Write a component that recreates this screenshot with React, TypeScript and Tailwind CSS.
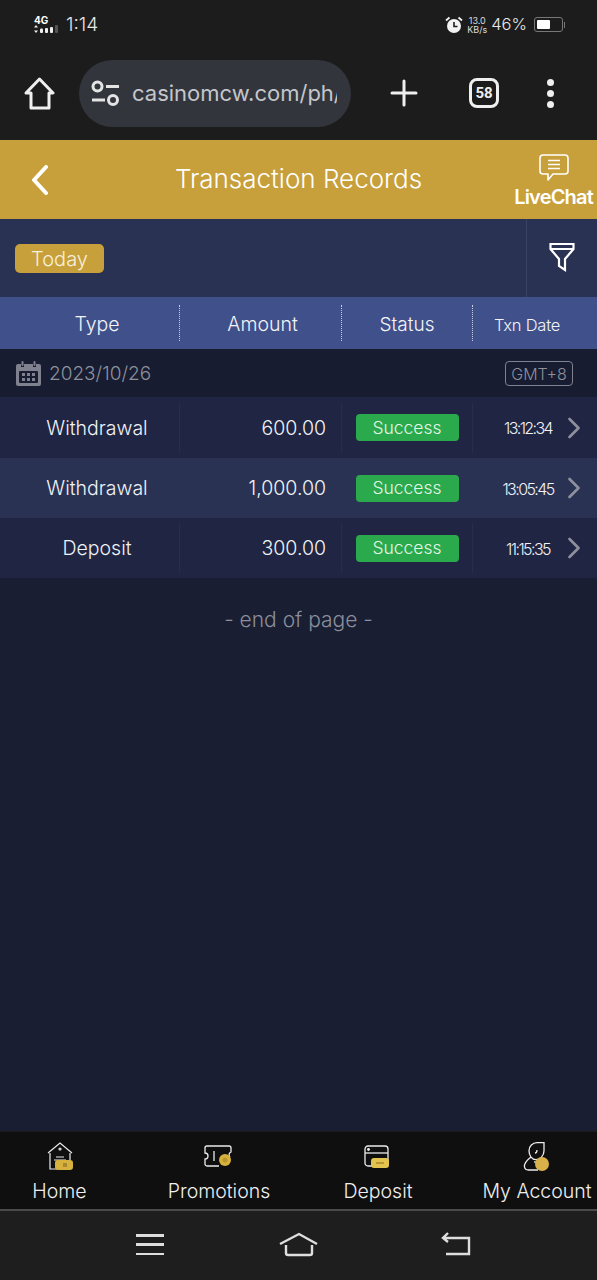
import { ChevronRight } from 'lucide-react'

const rows = [
  { type: 'Withdrawal', amount: '600.00', time: '13:12:34', alt: false, h: 'h-[61px]' },
  { type: 'Withdrawal', amount: '1,000.00', time: '13:05:45', alt: true, h: 'h-[60px]' },
  { type: 'Deposit', amount: '300.00', time: '11:15:35', alt: false, h: 'h-[60px]' },
]

function StatusBar() {
  return (
    <div className="h-[47px] flex items-center justify-between pt-[2px] pl-[34px] pr-[32px] text-[#e8e8e8]">
      <div className="flex items-center gap-[5px]">
        <div className="w-[27px] h-[20px] flex flex-col">
          <span className="text-[10px] leading-[10px] font-bold text-white">4G</span>
          <svg width="27" height="9" viewBox="0 0 27 9" fill="#eee">
            <path d="M2 0l2 2.6H0zM2 8L0 5.4h4z" />
            <rect x="6" y="3.5" width="3" height="4.5" rx="1" />
            <rect x="11" y="3" width="3" height="5" rx="1" />
            <rect x="16" y="2" width="3" height="6" rx="1" />
            <rect x="21" y="0" width="3" height="8" rx="1" fill="#555" />
          </svg>
        </div>
        <span className="text-[19px] leading-none font-light">1:14</span>
      </div>
      <div className="flex items-center">
        <svg width="18" height="18" viewBox="0 0 18 18" className="mr-[4px]">
          <circle cx="9" cy="10" r="7" fill="#f2f2f2" />
          <path d="M9 6v4.5h3.5" fill="none" stroke="#1c1c1c" strokeWidth="1.6" />
          <path d="M1 4.5L4.5 1.5M17 4.5L13.5 1.5" stroke="#f2f2f2" strokeWidth="1.8" />
        </svg>
        <div className="flex flex-col items-center text-[9px] leading-[9px] mr-[4px] text-[#ddd]">
          <span>13.0</span>
          <span>KB/s</span>
        </div>
        <span className="text-[16.5px] leading-none mr-[7px] font-light">46%</span>
        <div className="w-[29px] h-[15px] border border-[#777] rounded-[3px] p-[2px]">
          <div className="w-[13px] h-full bg-white rounded-[1px]" />
        </div>
        <div className="w-[1px] h-[6px] bg-[#777] ml-[1px]" />
      </div>
    </div>
  )
}

function BrowserBar() {
  return (
    <div className="h-[93px] flex items-center pb-[1px]">
      <div className="w-[79px] pl-[24px] shrink-0">
        <svg width="31" height="33" viewBox="0 0 31 33" fill="none" stroke="#efefef" strokeWidth="3" strokeLinejoin="round" strokeLinecap="round">
          <path d="M2 16L15.5 2 29 16h-4v15H7V16z" />
        </svg>
      </div>
      <div className="w-[272px] h-[67px] rounded-full bg-[#33353c] flex items-center pl-[12px] overflow-hidden shrink-0">
        <svg width="29" height="27" viewBox="0 0 29 27" fill="none" stroke="#e4e4e4" strokeWidth="3" className="shrink-0">
          <circle cx="6.5" cy="6.5" r="4.5" />
          <path d="M15 6.5h13M1 20h13" />
          <circle cx="22" cy="20" r="4.5" />
        </svg>
        <span className="ml-[12px] w-[205px] pt-[1px] overflow-hidden text-[22px] text-[#c4c6cb] whitespace-nowrap">casinomcw.com/ph/</span>
      </div>
      <svg width="28" height="28" viewBox="0 0 28 28" stroke="#efefef" strokeWidth="3" strokeLinecap="round" className="ml-[39px] shrink-0">
        <path d="M14 2v24M2 14h24" />
      </svg>
      <div className="ml-[51px] w-[30px] h-[30px] border-[3px] border-[#efefef] rounded-[8px] flex items-center justify-center text-[#efefef] text-[15px] font-bold shrink-0 font-['Roboto',sans-serif]">
        58
      </div>
      <div className="ml-[48px] flex flex-col gap-[4px] shrink-0">
        <span className="w-[7px] h-[7px] rounded-full bg-[#efefef]" />
        <span className="w-[7px] h-[7px] rounded-full bg-[#efefef]" />
        <span className="w-[7px] h-[7px] rounded-full bg-[#efefef]" />
      </div>
    </div>
  )
}

function Header() {
  return (
    <div className="h-[79px] bg-[#c7a03b] flex items-center relative">
      <svg width="18" height="30" viewBox="0 0 18 30" fill="none" stroke="#fff" strokeWidth="4" strokeLinecap="round" strokeLinejoin="round" className="ml-[31px]">
        <path d="M15 2L3 15l12 13" />
      </svg>
      <h1 className="absolute left-0 right-0 -mt-[1px] text-center text-[26px] font-light text-white leading-none">Transaction Records</h1>
      <div className="absolute right-[4px] top-[13px] flex flex-col items-center">
        <svg width="32" height="30" viewBox="0 0 32 30" fill="none" stroke="#fff" strokeWidth="1.6" strokeLinejoin="round">
          <path d="M5 2h22a3 3 0 0 1 3 3v13a3 3 0 0 1-3 3H15l-5 6v-6H5a3 3 0 0 1-3-3V5a3 3 0 0 1 3-3z" />
          <path d="M10 7.5h12M10 11.5h12M10 15.5h12" />
        </svg>
        <span className="text-[20px] leading-[22px] font-semibold text-white tracking-[-0.8px] mt-[3px]">LiveChat</span>
      </div>
    </div>
  )
}

function FilterBar() {
  return (
    <div className="h-[78px] bg-[#293253] flex items-center justify-between">
      <span className="ml-[15px] pt-[1px] w-[89px] h-[29px] rounded-[5px] bg-[#c7a03b] text-[#f7f0dc] text-[20px] font-light flex items-center justify-center">
        Today
      </span>
      <div className="w-[71px] h-full border-l border-[#3a4364] flex items-center justify-center">
        <svg width="26" height="30" viewBox="0 0 26 30" fill="none" stroke="#fff" strokeWidth="2.2" strokeLinejoin="miter" className="-mt-[2px]">
          <path d="M1.5 2h23v5L16 17v11l-6-4v-7L1.5 7zM1.5 7h23" />
        </svg>
      </div>
    </div>
  )
}

function TableHead() {
  return (
    <div className="h-[52px] bg-[#40508a] text-[#f3f4f8] font-light grid grid-cols-[180px_162px_131px_124px] items-center text-center">
      <div className="text-[19.5px] pl-[15px] h-[36px] leading-[38px] border-r border-dotted border-[#c8cde0]">Type</div>
      <div className="text-[19.5px] pl-[4px] h-[36px] leading-[38px] border-r border-dotted border-[#c8cde0]">Amount</div>
      <div className="text-[19px] h-[36px] leading-[40px] border-r border-dotted border-[#c8cde0]">Status</div>
      <div className="text-[16.5px] h-[36px] leading-[40px] tracking-[-0.2px] pr-[16px]">Txn Date</div>
    </div>
  )
}

function DateRow() {
  return (
    <div className="h-[48px] bg-[#171c30] flex items-center justify-between pl-[16px] pr-[24px] text-[#8d909c]">
      <div className="flex items-center gap-[8px]">
        <svg width="25" height="26" viewBox="0 0 25 26" fill="#7f828e">
          <path d="M2 4h3v3h3V4h9v3h3V4h3a2 2 0 0 1 2 2v18a2 2 0 0 1-2 2H2a2 2 0 0 1-2-2V6a2 2 0 0 1 2-2z" />
          <rect x="5.5" y="1" width="2" height="5" rx="1" />
          <rect x="17.5" y="1" width="2" height="5" rx="1" />
          <rect x="3" y="11" width="19" height="12" rx="1" fill="#171c30" />
          <rect x="6" y="13" width="3" height="3" />
          <rect x="11" y="13" width="3" height="3" />
          <rect x="16" y="13" width="3" height="3" />
          <rect x="6" y="18" width="3" height="3" />
          <rect x="11" y="18" width="3" height="3" />
          <rect x="16" y="18" width="3" height="3" />
        </svg>
        <span className="text-[19px] font-light pt-[2px]">2023/10/26</span>
      </div>
      <span className="w-[68px] h-[25px] mt-[1px] border border-[#7f828e] rounded-[4px] text-[16px] font-light flex items-center justify-center">GMT+8</span>
    </div>
  )
}

function TxnRow({ type, amount, time, alt, h }: { type: string; amount: string; time: string; alt: boolean; h: string }) {
  const line = alt ? 'border-transparent' : 'border-[#272d4c]'
  return (
    <div className={`${h} grid grid-cols-[180px_162px_131px_124px] items-center text-[#f1f2f6] font-light ${alt ? 'bg-[#293253]' : 'bg-[#1f2542]'}`}>
      <div className={`text-[19.5px] text-center pl-[15px] h-[50px] leading-[50px] border-r ${line}`}>{type}</div>
      <div className={`text-[19.5px] text-right pr-[15px] h-[50px] leading-[50px] border-r ${line}`}>{amount}</div>
      <div className={`h-[50px] flex items-center justify-center border-r ${line}`}>
        <span className="w-[103px] h-[27px] pt-[1px] rounded-[4px] bg-[#2aaa4c] text-[#e4f5e6] text-[17.5px] font-light flex items-center justify-center">Success</span>
      </div>
      <div className="flex items-center pl-[1px]">
        <span className="w-[108px] shrink-0 text-center text-[16px] pt-[1px] font-light tracking-[-1.6px]">{time}</span>
        <ChevronRight size={36} strokeWidth={1.8} className="text-[#8d909c] shrink-0 -ml-[26px]" />
      </div>
    </div>
  )
}

function HomeIcon() {
  return (
    <svg width="30" height="30" viewBox="0 0 30 30" fill="none" stroke="#ececec" strokeWidth="1.2">
      <path d="M3 11L15 1l12 10M5 11v16h7M25 11v7" />
      <path d="M11 15h8M9 18h12" />
      <circle cx="15" cy="7" r="1" />
      <rect x="10" y="18" width="18" height="10" rx="3" fill="#d6b13e" stroke="none" />
      <rect x="18" y="21" width="4" height="4" fill="#a8892d" stroke="none" />
    </svg>
  )
}

function PromoIcon() {
  return (
    <svg width="30" height="30" viewBox="0 0 30 30" fill="none" stroke="#ececec" strokeWidth="1.3">
      <path d="M3 4h22a2 2 0 0 1 2 2v4a3 3 0 0 0-1 5M15 24H3a2 2 0 0 1-2-2v-5a3 3 0 0 0 0-6V6a2 2 0 0 1 2-2" />
      <path d="M10 9v10" />
      <circle cx="21" cy="18" r="6" fill="#d6b13e" stroke="none" />
      <circle cx="21" cy="18" r="2.5" fill="#b8962f" stroke="none" />
    </svg>
  )
}

function DepositIcon() {
  return (
    <svg width="30" height="30" viewBox="0 0 30 30" fill="none" stroke="#ececec" strokeWidth="1.3">
      <rect x="2" y="4" width="23" height="20" rx="3" />
      <path d="M2 11h23" />
      <circle cx="5.5" cy="7.5" r="0.8" fill="#ececec" />
      <rect x="8" y="16" width="18" height="10" rx="3" fill="#e2c44e" stroke="none" />
      <path d="M13 21h8" stroke="#a8892d" strokeWidth="1.5" />
    </svg>
  )
}

function AccountIcon() {
  return (
    <svg width="30" height="30" viewBox="0 0 30 30" fill="none" stroke="#ececec" strokeWidth="1.3">
      <path d="M22 0.7H15a8 8 0 0 0-8 8c0 5 3 9 7 9s8-4 8-9z" />
      <path d="M15 8c0 2-1 3-2 3" />
      <path d="M9 15C5 18 2 22 2.5 25c.3 2 2 3 4 3H16" />
      <path d="M12 20h4" />
      <circle cx="20" cy="22" r="7" fill="#d8b14a" stroke="none" />
    </svg>
  )
}

const tabs = [
  { label: 'Home', icon: <HomeIcon />, w: 'w-[119px]' },
  { label: 'Promotions', icon: <PromoIcon />, w: 'w-[200px]' },
  { label: 'Deposit', icon: <DepositIcon />, w: 'w-[118px]' },
  { label: 'My Account', icon: <AccountIcon />, w: 'w-[200px]' },
]

function BottomTabs() {
  return (
    <div className="h-[80px] bg-[#0f0f0f] flex overflow-hidden border-t border-[#1b1b1b] border-b-2 border-b-[#4a4a4a]">
      {tabs.map((t) => (
        <div key={t.label} className={`${t.w} shrink-0 flex flex-col items-center pt-[10px]`}>
          <div className="h-[31px]">{t.icon}</div>
          <span className="text-[19.5px] font-light text-[#efefef] leading-[24px] mt-[6px] whitespace-nowrap">{t.label}</span>
        </div>
      ))}
    </div>
  )
}

function AndroidNav() {
  return (
    <div className="flex-1 bg-[#1e1e1e] flex items-start pl-[136px] pt-[21px]">
      <div className="flex flex-col gap-[6.75px] w-[28px] mt-[2px] shrink-0">
        <span className="h-[2.5px] bg-[#dedede]" />
        <span className="h-[2.5px] bg-[#dedede]" />
        <span className="h-[2.5px] bg-[#dedede]" />
      </div>
      <svg width="40" height="26" viewBox="0 0 40 26" fill="none" stroke="#dedede" strokeWidth="2.4" className="ml-[115px] shrink-0">
        <path d="M1 12L20 2l18 10M7 13v8a2 2 0 0 0 2 2h22a2 2 0 0 0 2-2v-8" />
      </svg>
      <svg width="30" height="24" viewBox="0 0 30 24" fill="none" stroke="#dedede" strokeWidth="2.4" className="ml-[122px] shrink-0">
        <path d="M2 6h26v16H5M7 1L2 6l5 4" />
      </svg>
    </div>
  )
}

export default function App() {
  return (
    <div className="w-[597px] h-[1280px] bg-[#1c1c1c] flex flex-col overflow-hidden font-['Inter',sans-serif]">
      <StatusBar />
      <BrowserBar />
      <Header />
      <FilterBar />
      <TableHead />
      <DateRow />
      {rows.map((r, i) => (
        <TxnRow key={i} {...r} />
      ))}
      <div className="h-[553px] bg-[#191e33] text-center text-[#8b8e9b] text-[21px] font-light pt-[28px] leading-[28px]">- end of page -</div>
      <BottomTabs />
      <AndroidNav />
    </div>
  )
}
